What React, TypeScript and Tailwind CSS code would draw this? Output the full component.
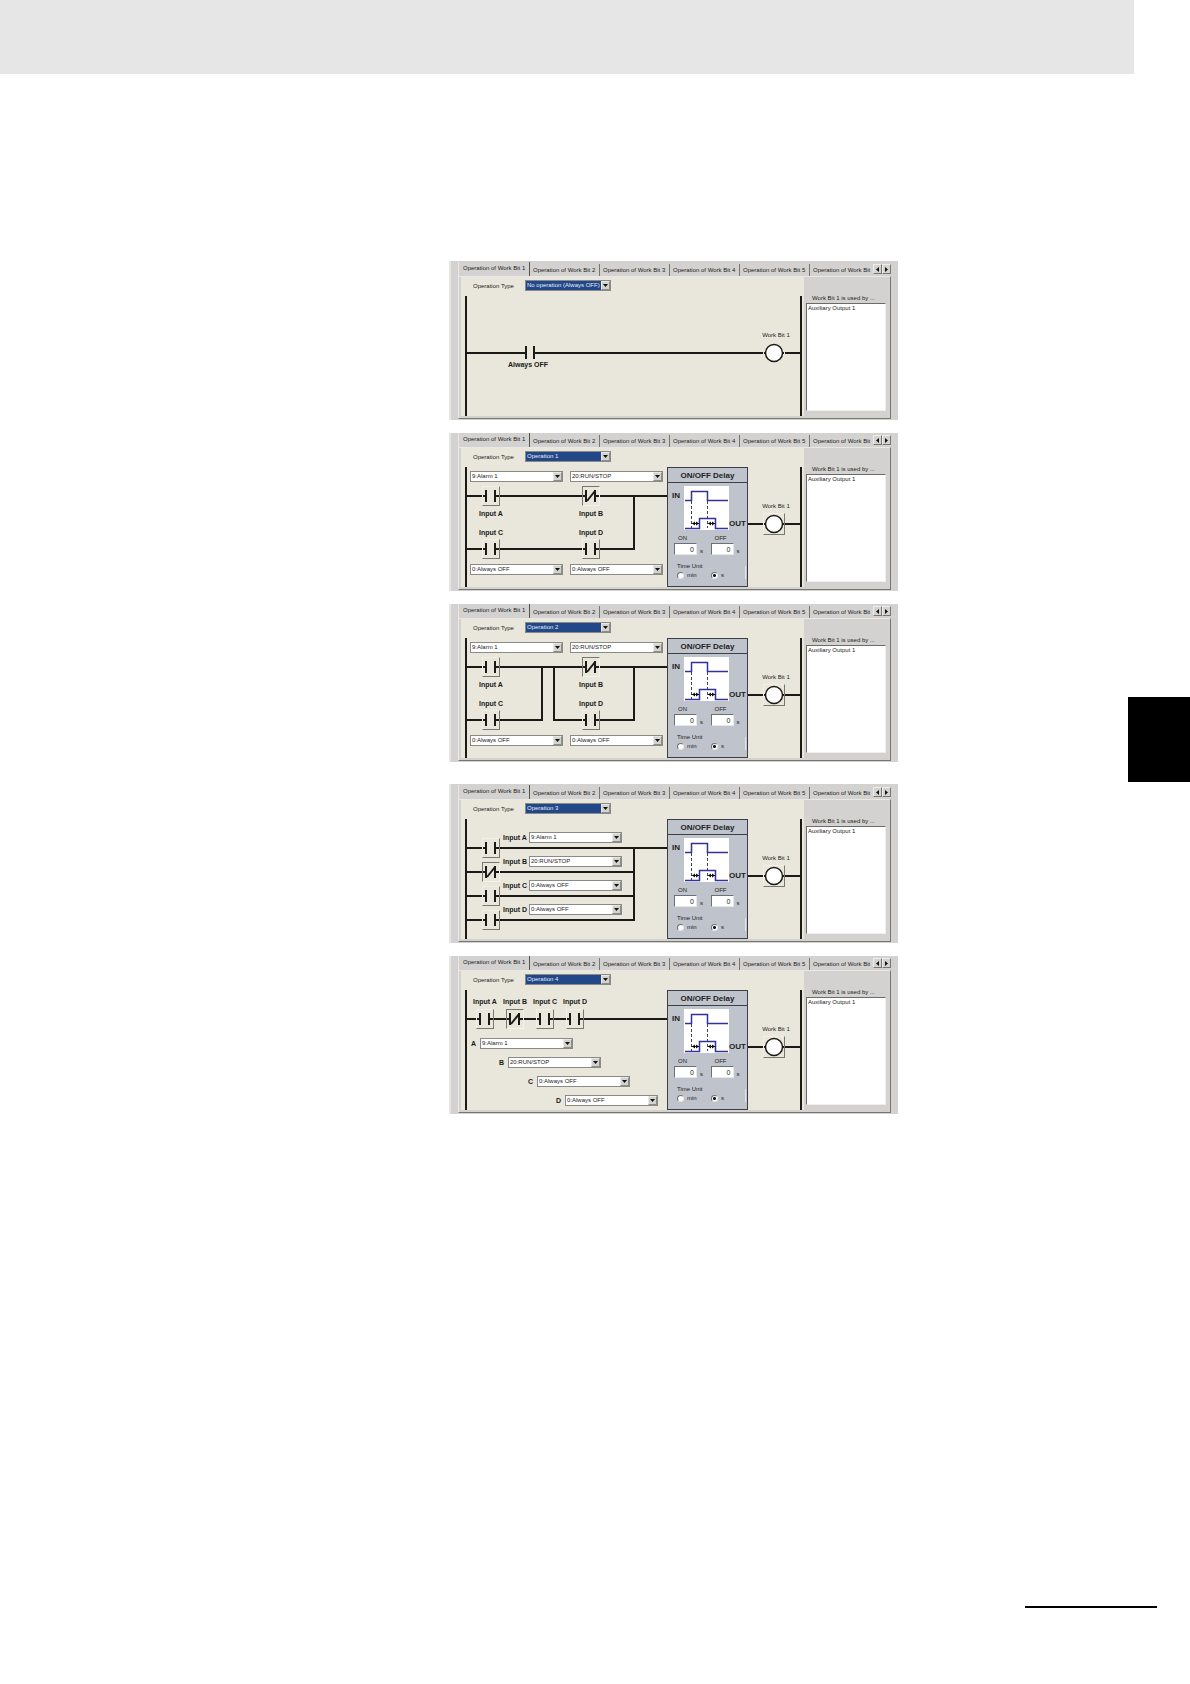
import React, { useId } from 'react';
import clsx from 'clsx';

const INPUT_OPTIONS = ['0:Always OFF', '9:Alarm 1', '20:RUN/STOP'];
const OPERATION_OPTIONS = ['No operation (Always OFF)', 'Operation 1', 'Operation 2', 'Operation 3', 'Operation 4'];
const TABS = [
  'Operation of Work Bit 1',
  'Operation of Work Bit 2',
  'Operation of Work Bit 3',
  'Operation of Work Bit 4',
  'Operation of Work Bit 5',
  'Operation of Work Bit',
];

interface InputDef {
  name: string;
  value: string;
  closed?: boolean;
}

const A: InputDef = { name: 'A', value: '9:Alarm 1' };
const B: InputDef = { name: 'B', value: '20:RUN/STOP', closed: true };
const C: InputDef = { name: 'C', value: '0:Always OFF' };
const D: InputDef = { name: 'D', value: '0:Always OFF' };

interface ComboProps {
  id: string;
  value: string;
  options: string[];
  selected?: boolean;
  className?: string;
}

const Combo: React.FC<ComboProps> = ({ id, value, options, selected, className }) => (
  <div className={clsx('flex h-[11px] shrink-0 border border-[#8a8a86] bg-white', className)}>
    <select
      id={id}
      defaultValue={value}
      className={clsx(
        'min-w-0 flex-1 appearance-none pl-px text-[6px] leading-[9px] outline-none',
        selected ? 'bg-[#23488a] text-[#e4eaf4]' : 'bg-white text-[#222]'
      )}
    >
      {options.map((o) => (
        <option key={o}>{o}</option>
      ))}
    </select>
    <span className="pointer-events-none flex w-[9px] items-center justify-center border border-[#8d8d89] border-t-[#e8e8e4] border-l-[#e8e8e4] bg-[#d3d2ce]">
      <svg width="5" height="3" viewBox="0 0 5 3">
        <path d="M0 0h5L2.5 3z" fill="#111" />
      </svg>
    </span>
  </div>
);

const InputCombo: React.FC<{ id: string; input: InputDef }> = ({ id, input }) => (
  <Combo id={id} value={input.value} options={INPUT_OPTIONS} className="w-[93px]" />
);

// NO contact is a raised button, NC contact is a pressed one with a slash
const Contact: React.FC<{ input: InputDef; className?: string }> = ({ input, className }) => (
  <button
    type="button"
    aria-label={`Input ${input.name} contact`}
    aria-pressed={!!input.closed}
    className={clsx(
      'h-5 w-[18px] shrink-0 border bg-[#e9e7db]',
      input.closed ? 'border-[#77766f] border-r-[#f4f3ea] border-b-[#f4f3ea]' : 'border-[#f1f0e6] border-r-[#77766f] border-b-[#77766f]',
      className
    )}
  >
    <svg width="16" height="18" viewBox="0 0 16 18" fill="none" stroke="#1b1a17" strokeWidth="2">
      <path d="M0 9h3M3 3v12M12 3v12M13 9h3" />
      {input.closed && <path d="M4 14L12 4" />}
    </svg>
  </button>
);

const Tag: React.FC<{ htmlFor: string; className?: string; children: React.ReactNode }> = ({ htmlFor, className, children }) => (
  <label htmlFor={htmlFor} className={clsx('block text-[7px] leading-[8px] font-bold whitespace-nowrap text-[#1b1a17]', className)}>
    {children}
  </label>
);

const Wires: React.FC<{ d: string }> = ({ d }) => (
  <svg className="absolute inset-0 h-full w-full" fill="none" stroke="#1b1a17" strokeWidth="2">
    <path d={d} />
  </svg>
);

const NoOperation = () => (
  <>
    <Wires d="M0 57H58M59 50V63M67 50V63M68 57H281" />
    <p className="pt-[65px] pl-[41px] text-[7px] leading-[8px] font-bold text-[#1b1a17]">Always OFF</p>
  </>
);

const InputPair: React.FC<{ upper: InputDef; lower: InputDef }> = ({ upper, lower }) => {
  const id = useId();
  return (
    <div className="flex flex-col">
      <InputCombo id={`${id}u`} input={upper} />
      <Contact input={upper} className="my-1 ml-3" />
      <Tag htmlFor={`${id}u`} className="ml-[9px]">Input {upper.name}</Tag>
      <Tag htmlFor={`${id}l`} className="mt-[11px] ml-[9px]">Input {lower.name}</Tag>
      <Contact input={lower} className="mt-[2px] mb-[5px] ml-3" />
      <InputCombo id={`${id}l`} input={lower} />
    </div>
  );
};

// Operations 1 and 2 share the same 2x2 arrangement, only the wiring differs
const TwoByTwo: React.FC<{ wires: string }> = ({ wires }) => (
  <>
    <Wires d={wires} />
    <div className="relative flex gap-[7px] pt-1 pl-[3px]">
      <InputPair upper={A} lower={C} />
      <InputPair upper={B} lower={D} />
    </div>
  </>
);

const Parallel = () => {
  const id = useId();
  return (
    <>
      <Wires d="M0 29H200M0 53H166M0 77H166M0 101H167V29" />
      <div className="relative pt-[13px] pl-[15px]">
        {[A, B, C, D].map((input) => (
          <div key={input.name} className="flex h-6 items-start">
            <Contact input={input} className="mt-[6px]" />
            <Tag htmlFor={id + input.name} className="w-[29px] pt-[2px] pl-[3px]">Input {input.name}</Tag>
            <InputCombo id={id + input.name} input={input} />
          </div>
        ))}
      </div>
    </>
  );
};

const Series = () => {
  const id = useId();
  return (
    <>
      <Wires d="M0 29H200" />
      <div className="relative flex pt-2 pl-[6px]">
        {[A, B, C, D].map((input) => (
          <div key={input.name} className="w-[30px]">
            <Tag htmlFor={id + input.name}>Input {input.name}</Tag>
            <Contact input={input} className="mt-[3px] ml-[3px] block" />
          </div>
        ))}
      </div>
      <div className="relative flex flex-col gap-2 pt-[9px]">
        {[
          { input: A, indent: 'pl-1' },
          { input: B, indent: 'pl-8' },
          { input: C, indent: 'pl-[61px]' },
          { input: D, indent: 'pl-[89px]' },
        ].map(({ input, indent }) => (
          <div key={input.name} className={clsx('flex items-center', indent)}>
            <Tag htmlFor={id + input.name} className="w-[9px]">{input.name}</Tag>
            <InputCombo id={id + input.name} input={input} />
          </div>
        ))}
      </div>
    </>
  );
};

const DelayField: React.FC<{ label: string }> = ({ label }) => {
  const id = useId();
  return (
    <div className="w-[37px]">
      <label htmlFor={id} className="block pl-1 leading-[9px]">{label}</label>
      <div className="flex items-end gap-[3px]">
        <input
          id={id}
          type="text"
          defaultValue="0"
          className="h-3 w-[23px] border border-[#e6e7ea] border-t-[#6d7078] border-l-[#6d7078] bg-white pr-[2px] text-right text-[7px] leading-[9px] outline-none"
        />
        <span className="leading-[8px]">s</span>
      </div>
    </div>
  );
};

const Radio: React.FC<{ name: string; label: string; checked?: boolean }> = ({ name, label, checked }) => (
  <label className="flex w-[34px] items-center gap-[3px] leading-[8px]">
    <input
      type="radio"
      name={name}
      defaultChecked={checked}
      className="h-[7px] w-[7px] appearance-none rounded-full border border-[#e6e7ea] border-t-[#6d7078] border-l-[#6d7078] bg-white checked:bg-[radial-gradient(circle,#111_1px,#fff_2px)]"
    />
    {label}
  </label>
);

const DelayBox = () => {
  const unit = useId();
  return (
    <div className="h-[120px] w-[81px] shrink-0 border border-[#3c3f46] bg-[#bfc3cc] text-[6px] text-[#222]">
      <h3 className="h-[15px] border-b border-[#3c3f46] text-center text-[8px] leading-[15px] font-bold">ON/OFF Delay</h3>
      <div className="mt-[3px] flex h-[44px] text-[8px] leading-[8px] font-bold">
        <span className="w-4 pt-[6px] pl-1">IN</span>
        <svg width="45" height="44" viewBox="0 0 45 44" fill="none" className="shrink-0 bg-white">
          <path d="M7.500 15v27M23.500 15v27" stroke="#444" strokeDasharray="3 2" />
          <path d="M1 14.500H7.500V5.500H23.500V14.500H44M1 42.500H15.500V32.500H31.500V42.500H44" stroke="#32329a" strokeWidth="1.500" />
          <path d="M8 37.500H15M24 37.500H31" stroke="#111" />
          <path d="M8 37.500l3-2v4zM15 37.500l-3-2v4zM24 37.500l3-2v4zM31 37.500l-3-2v4z" fill="#111" />
        </svg>
        <span className="self-end pb-[2px]">OUT</span>
      </div>
      <div className="mt-1 flex pl-[6px]">
        <DelayField label="ON" />
        <DelayField label="OFF" />
      </div>
      <fieldset className="mt-[7px] ml-[9px] w-[54px] border-r border-[#e3e5ea]">
        <legend className="leading-[8px]">Time Unit</legend>
        <div className="flex pt-px">
          <Radio name={unit} label="min" />
          <Radio name={unit} label="s" checked />
        </div>
      </fieldset>
    </div>
  );
};

const Coil: React.FC<{ raised?: boolean }> = ({ raised }) => (
  <div className="min-w-[52px] flex-1 pt-[35px]">
    <p className="pl-1 text-center text-[6px] leading-[8px] text-[#222]">Work Bit 1</p>
    <div className="mt-[3px] flex h-[22px] items-center">
      <span className="h-[2px] flex-1 bg-[#1b1a17]" />
      <button
        type="button"
        aria-label="Work Bit 1"
        className={clsx('h-[22px] w-[22px] border', raised ? 'border-[#f1f0e6] border-r-[#77766f] border-b-[#77766f]' : 'border-transparent')}
      >
        <svg width="20" height="20" viewBox="0 0 20 20">
          <circle cx="10" cy="10" r="8.500" fill="#fff" stroke="#1b1a17" strokeWidth="1.500" />
          <path d="M0 10h2M18 10h2" stroke="#1b1a17" strokeWidth="2" />
        </svg>
      </button>
      <span className="h-[2px] flex-1 bg-[#1b1a17]" />
    </div>
  </div>
);

interface PanelProps {
  operation: string;
  className?: string;
  children: React.ReactNode;
}

const WorkBitPanel: React.FC<PanelProps> = ({ operation, className, children }) => {
  const id = useId();
  const idle = operation.startsWith('No operation');

  return (
    <section className={clsx('border-l-2 border-[#e6e5e3] bg-[#d3d2d1] pr-[7px] pb-px pl-[7px] text-[6px] text-[#222]', className)}>
      <div role="tablist" className="flex h-[14px]">
        <div className="flex w-0 flex-1 overflow-hidden border-l border-[#e9e8e6]">
          {TABS.map((tab, i) => (
            <button
              key={tab}
              type="button"
              role="tab"
              aria-selected={i === 0}
              className={clsx(
                'shrink-0 text-left whitespace-nowrap',
                i === 0 && 'w-[71px] border-r border-[#55544f] pb-[2px] pl-1 leading-[11px]',
                i > 0 && 'mt-[2px] pb-px pl-[3px] leading-[10px]',
                i > 0 && i < 5 && 'w-[70px] border-r border-[#77766f]'
              )}
            >
              {tab}
            </button>
          ))}
        </div>
        <button type="button" aria-label="Previous tabs" className="mt-[2px] flex h-[10px] w-[9px] items-center justify-center border border-[#77766f] border-t-[#efeeec] border-l-[#efeeec]">
          <svg width="3" height="5" viewBox="0 0 3 5"><path d="M3 0v5L0 2.500z" fill="#111" /></svg>
        </button>
        <button type="button" aria-label="Next tabs" className="mt-[2px] flex h-[10px] w-[9px] items-center justify-center border border-[#77766f] border-t-[#efeeec] border-l-[#efeeec]">
          <svg width="3" height="5" viewBox="0 0 3 5"><path d="M0 0v5l3-2.500z" fill="#111" /></svg>
        </button>
      </div>

      <div className="flex border border-[#e9e8e6] border-r-[#77766f] border-b-[#77766f] pb-[2px] pl-[2px]">
        <div className="flex-1 bg-[#e9e7db] pt-[3px] pr-[2px] pl-1">
          <div className="flex items-center pl-2">
            <label htmlFor={id} className="w-[52px] leading-[8px]">Operation Type</label>
            <Combo id={id} value={operation} options={OPERATION_OPTIONS} selected className="w-[86px]" />
          </div>
          <div className="mt-[5px] flex h-[120px] border-x-2 border-[#1b1a17]">
            <div className={clsx('relative shrink-0', idle ? 'w-[281px]' : 'w-[200px]')}>{children}</div>
            {!idle && <DelayBox />}
            <Coil raised={!idle} />
          </div>
        </div>
        <div className="flex w-[86px] flex-col pt-[17px] pr-1 pb-[5px] pl-[2px]">
          <h4 className="pl-[6px] leading-[9px]">Work Bit 1 is used by ...</h4>
          <ul className="flex-1 border border-[#efeeec] border-t-[#6c6b67] border-l-[#6c6b67] bg-white pl-px leading-[8px]">
            <li>Auxiliary Output 1</li>
          </ul>
        </div>
      </div>
    </section>
  );
};

export default function App() {
  return (
    <div className="flex min-h-screen flex-col bg-white font-['Liberation_Sans',Arial,sans-serif]">
      <header className="mr-14 h-[74px] bg-[#e6e6e6]" />

      <div className="grid grid-cols-[449fr_449fr_292fr]">
        <main className="col-start-2 flex flex-col gap-[13px] pt-[187px]">
          <WorkBitPanel operation="No operation (Always OFF)" className="pt-px">
            <NoOperation />
          </WorkBitPanel>
          <WorkBitPanel operation="Operation 1">
            <TwoByTwo wires="M0 29H200M0 82H167V29" />
          </WorkBitPanel>
          <WorkBitPanel operation="Operation 2">
            <TwoByTwo wires="M0 29H200M0 82H75V29M167 29V82H87V29" />
          </WorkBitPanel>
          <WorkBitPanel operation="Operation 3" className="mt-[9px] pt-px">
            <Parallel />
          </WorkBitPanel>
          <WorkBitPanel operation="Operation 4">
            <Series />
          </WorkBitPanel>
        </main>

        {/* chapter marker on the page edge */}
        <aside className="flex justify-end pt-[623px]">
          <div className="h-[85px] w-[62px] bg-black" />
        </aside>
      </div>

      <footer className="mt-auto flex justify-end pr-[33px] pb-[76px]">
        <hr className="w-[132px] border-t-2 border-black" />
      </footer>
    </div>
  );
}
